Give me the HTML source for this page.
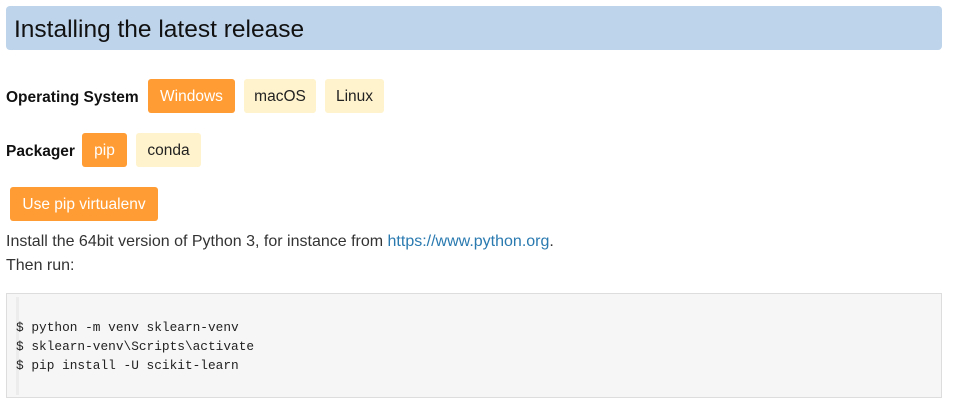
<!DOCTYPE html>
<html><head><meta charset="utf-8"><style>
*{margin:0;padding:0;box-sizing:border-box}
body{width:959px;height:407px;background:#fff;font-family:"Liberation Sans",sans-serif;color:#212529;position:relative;overflow:hidden}
.h{position:absolute;left:6px;top:6px;width:936px;height:44px;background:#bed4ea;border-radius:4px;font-size:24.5px;padding-left:8px;line-height:48px;color:#111}
.lbl{position:absolute;font-weight:bold;font-size:15.5px;color:#111}
.b{position:absolute;height:34px;line-height:36px;text-align:center;font-size:15.5px;border-radius:3px;background:#fff3cd;color:#222}
.on{background:#ff9c34;color:#fff}
.t{position:absolute;left:6px;font-size:16px;color:#333}
a{color:#2a7ab0;text-decoration:none}
.code{position:absolute;left:6px;top:293px;width:936px;height:105px;background:#f6f6f6;border:1px solid #ddd}
.bar{position:absolute;left:9px;top:3px;width:3px;height:98px;background:#ececec}
pre{position:absolute;left:9px;top:24px;font-family:"Liberation Mono",monospace;font-size:12.8px;line-height:19px;color:#222}
</style></head><body>
<div class="h">Installing the latest release</div>
<div class="lbl" style="left:6px;top:89px">Operating System</div>
<div class="b on" style="left:148px;top:79px;width:87px">Windows</div>
<div class="b" style="left:244px;top:79px;width:72px">macOS</div>
<div class="b" style="left:325px;top:79px;width:59px">Linux</div>
<div class="lbl" style="left:6px;top:143px">Packager</div>
<div class="b on" style="left:82px;top:133px;width:45px">pip</div>
<div class="b" style="left:136px;top:133px;width:65px">conda</div>
<div class="b on" style="left:10px;top:187px;width:148px">Use pip virtualenv</div>
<div class="t" style="top:233px">Install the 64bit version of Python 3, for instance from <a>https://www.python.org</a>.</div>
<div class="t" style="top:257px">Then run:</div>
<div class="code"><div class="bar"></div><pre>$ python -m venv sklearn-venv
$ sklearn-venv\Scripts\activate
$ pip install -U scikit-learn</pre></div>
</body></html>
